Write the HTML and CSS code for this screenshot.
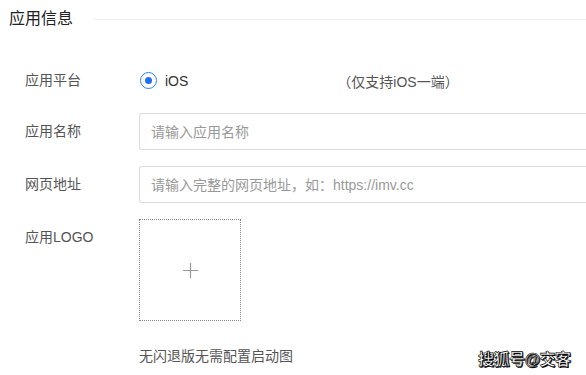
FILE: index.html
```html
<!DOCTYPE html>
<html lang="zh-CN">
<head>
    <meta charset="UTF-8">
    <meta name="viewport" content="width=device-width, initial-scale=1.0">
    <title>应用信息</title>
    <link rel="stylesheet" href="styles.css">
</head>
<body>
    <div class="page">
        <!-- Section title -->
        <header class="section-head">
            <h2>应用信息</h2>
            <span class="head-line"></span>
        </header>

        <form class="form">
            <div class="row">
                <label class="label">应用平台</label>
                <div class="field radio-field">
                    <span class="radio"><span class="radio-dot"></span></span>
                    <span class="radio-text">iOS</span>
                    <span class="note">（仅支持iOS一端）</span>
                </div>
            </div>
            <div class="row">
                <label class="label">应用名称</label>
                <div class="field">
                    <input type="text" class="input" placeholder="请输入应用名称">
                </div>
            </div>
            <div class="row">
                <label class="label">网页地址</label>
                <div class="field">
                    <input type="text" class="input" placeholder="请输入完整的网页地址，如：https://imv.cc">
                </div>
            </div>
            <div class="row">
                <label class="label">应用LOGO</label>
                <div class="field">
                    <div class="upload">
                        <svg width="17" height="17" viewBox="0 0 17 17">
                            <path d="M8.5 1v15M1 8.5h15" stroke="#999" stroke-width="1.2" fill="none"/>
                        </svg>
                    </div>
                    <p class="hint">无闪退版无需配置启动图</p>
                </div>
            </div>
        </form>

        <div class="watermark">搜狐号@交客</div>
    </div>
</body>
</html>
```

FILE: styles.css
```css
* {
    margin: 0;
    padding: 0;
    box-sizing: border-box;
}

body {
    font-family: "Liberation Sans", "Noto Sans CJK SC", sans-serif;
    background-color: #fff;
    color: #333;
    overflow: hidden;
}

.page {
    position: relative;
    width: 586px;
    height: 375px;
    overflow: hidden;
}

.section-head {
    display: flex;
    align-items: center;
    height: 38px;
    padding-left: 9px;
}

.section-head h2 {
    font-size: 16px;
    font-weight: normal;
    color: #222;
    line-height: 20px;
}

.head-line {
    flex: 1;
    height: 1px;
    margin-left: 20px;
    background-color: #eee;
}

.form {
    padding-top: 24px;
    padding-left: 25px;
}

.row {
    display: flex;
    margin-bottom: 16px;
}

.row:first-child {
    margin-bottom: 14px;
}

.label {
    width: 114px;
    flex-shrink: 0;
    font-size: 14px;
    line-height: 37px;
    color: #555;
}

.field {
    flex: 1;
}

.radio-field {
    display: flex;
    align-items: center;
    height: 37px;
    font-size: 14px;
}

.radio {
    display: flex;
    align-items: center;
    justify-content: center;
    width: 17px;
    height: 17px;
    margin-left: 1px;
    border: 1.5px solid #2f7df6;
    border-radius: 50%;
}

.radio-dot {
    width: 7px;
    height: 7px;
    border-radius: 50%;
    background-color: #1f6ff0;
}

.radio-text {
    margin-left: 8px;
    color: #333;
}

.note {
    margin-left: 149px;
    font-size: 14px;
    color: #555;
}

.input {
    display: block;
    width: 100%;
    height: 37px;
    padding: 0 11px;
    border: 1px solid #ddd;
    border-right: none;
    border-radius: 3px 0 0 3px;
    font-family: inherit;
    font-size: 14px;
    color: #333;
    outline: none;
}

.input::placeholder {
    color: #999;
}

.upload {
    display: flex;
    align-items: center;
    justify-content: center;
    width: 102px;
    height: 102px;
    border: 1px dotted #888;
}

.hint {
    margin-top: 26px;
    font-size: 14px;
    line-height: 18px;
    color: #555;
}

.watermark {
    position: absolute;
    left: 478px;
    top: 346px;
    font-size: 16px;
    font-weight: bold;
    color: #fff;
    -webkit-text-stroke: 0.6px #000;
    text-shadow: 1px 1px 0 #000;
    letter-spacing: -0.5px;
}
```
